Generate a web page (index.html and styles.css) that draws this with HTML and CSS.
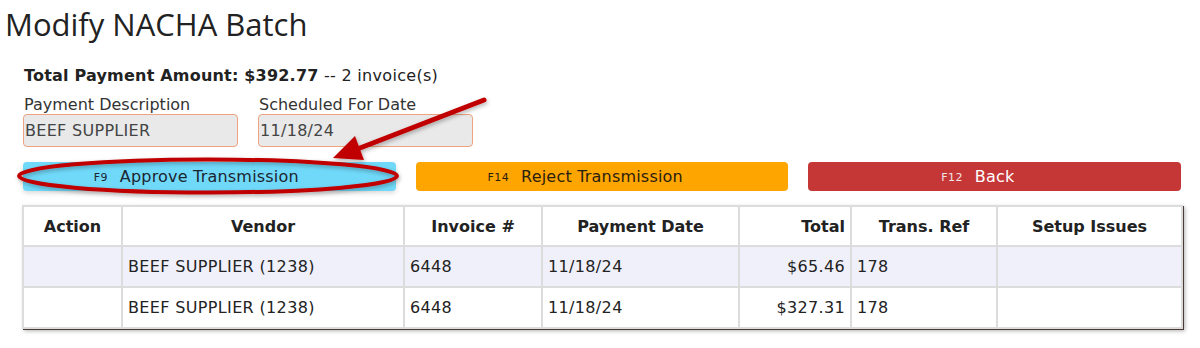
FILE: index.html
```html
<!DOCTYPE html>
<html>
<head>
<meta charset="utf-8">
<link rel="stylesheet" href="styles.css">
</head>
<body>
<div class="page">
  <h1 class="title">Modify NACHA Batch</h1>
  <div class="content">
    <div class="total"><b>Total Payment Amount: $392.77</b> -- 2 invoice(s)</div>
    <div class="fields">
      <div class="field">
        <label class="lbl">Payment Description</label>
        <div class="inp">BEEF SUPPLIER</div>
      </div>
      <div class="field">
        <label class="lbl">Scheduled For Date</label>
        <div class="inp">11/18/24</div>
      </div>
    </div>
    <div class="buttons">
      <div class="btn approve"><span class="txt"><span class="fk">F9</span>Approve Transmission</span></div>
      <div class="btn reject"><span class="txt"><span class="fk">F14</span>Reject Transmission</span></div>
      <div class="btn back"><span class="txt"><span class="fk">F12</span>Back</span></div>
    </div>
    <table class="grid">
      <colgroup>
        <col class="c1"><col class="c2"><col class="c3"><col class="c4"><col class="c5"><col class="c6"><col class="c7">
      </colgroup>
      <thead>
        <tr><th>Action</th><th>Vendor</th><th>Invoice #</th><th>Payment Date</th><th class="r">Total</th><th>Trans. Ref</th><th>Setup Issues</th></tr>
      </thead>
      <tbody>
        <tr class="alt"><td></td><td>BEEF SUPPLIER (1238)</td><td>6448</td><td>11/18/24</td><td class="r">$65.46</td><td>178</td><td></td></tr>
        <tr><td></td><td>BEEF SUPPLIER (1238)</td><td>6448</td><td>11/18/24</td><td class="r">$327.31</td><td>178</td><td></td></tr>
      </tbody>
    </table>
  </div>
  <svg class="annot" width="1200" height="348" viewBox="0 0 1200 348">
    <defs>
      <filter id="sh" x="-10%" y="-30%" width="120%" height="160%">
        <feDropShadow dx="1" dy="2" stdDeviation="2" flood-color="#000" flood-opacity="0.3"/>
      </filter>
    </defs>
    <g filter="url(#sh)">
      <ellipse cx="208" cy="176" rx="189" ry="16.5" fill="none" stroke="#c00000" stroke-width="4"/>
      <line x1="484" y1="100" x2="360" y2="148" stroke="#c00000" stroke-width="5" stroke-linecap="round"/>
      <polygon points="333,158 364,160 355,136" fill="#c00000"/>
    </g>
  </svg>
</div>
</body>
</html>
```
FILE: styles.css
```css
* { box-sizing: border-box; }
html, body { margin: 0; padding: 0; background: #fff; }
body { font-family: "DejaVu Sans", Verdana, sans-serif; color: #222; }
.page { position: relative; width: 1200px; height: 348px; overflow: hidden; }
.title {
  margin: 0;
  padding: 4px 0 0 5px;
  font-family: "Open Sans", sans-serif;
  font-weight: 400;
  font-size: 31px;
  line-height: 40px;
  color: #222;
}
.content { padding: 0 19px 0 22px; }
.total { margin-top: 22px; padding-left: 2px; font-size: 16px; line-height: 19px; color: #222; letter-spacing: 0.3px; }
.total b { letter-spacing: 0.2px; }
.fields { display: flex; gap: 20px; margin-top: 11px; padding-left: 1px; }
.field { display: flex; flex-direction: column; width: 215px; }
.lbl { font-size: 16px; line-height: 18px; padding-left: 1px; color: #333; }
.inp {
  height: 33px;
  border: 1px solid #eea27e;
  border-radius: 4px;
  background: #e9e9e9;
  color: #444;
  font-size: 16px;
  line-height: 31px;
  padding-left: 1px;
  letter-spacing: 0.3px;
}
.buttons {
  display: grid;
  grid-template-columns: 1fr 1fr 1fr;
  gap: 20px;
  margin-top: 15px;
  padding-left: 1px;
}
.btn {
  height: 29px;
  border-radius: 4px;
  display: flex;
  align-items: center;
  justify-content: center;
  font-size: 16px;
}
.txt { position: relative; line-height: 20px; letter-spacing: 0.2px; }
.fk {
  position: absolute;
  right: 100%;
  margin-right: 12px;
  top: 4px;
  font-size: 11px;
  line-height: 14px;
  white-space: nowrap;
  letter-spacing: 0.4px;
}
.approve { background: #70d9f9; color: #1c2530; box-shadow: 0 2px 5px rgba(0,0,0,0.15); }
.reject { background: #ffa500; color: #2a2010; }
.back { background: #c53737; color: #fff; }
.back .fk { color: #f1e6e6; }
.grid {
  margin-top: 14px;
  width: 1159px;
  border-collapse: collapse;
  table-layout: fixed;
  font-size: 16px;
  color: #222;
  box-shadow: 1px 1px 0 #4a3c34, 2px 2px 4px rgba(0,0,0,0.3);
}
.c1 { width: 99px; } .c2 { width: 282px; } .c3 { width: 138px; } .c4 { width: 197px; }
.c5 { width: 112px; } .c6 { width: 146px; } .c7 { width: 185px; }
.grid th, .grid td { border: 2px solid #dcdcdc; padding: 0 5px; text-align: left; }
.grid th { height: 40px; font-weight: 700; text-align: center; }
.grid td { height: 41px; letter-spacing: 0.35px; }
.grid .r { text-align: right; }
.grid tr.alt td { background: #f0f0fa; }
.annot { position: absolute; left: 0; top: 0; pointer-events: none; }
```
